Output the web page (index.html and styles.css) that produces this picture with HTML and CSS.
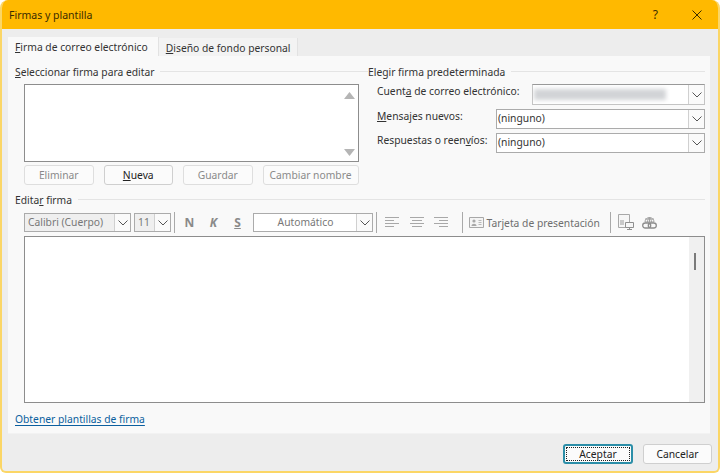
FILE: index.html
```html
<!DOCTYPE html>
<html lang="es">
<head>
    <meta charset="UTF-8">
    <meta name="viewport" content="width=device-width, initial-scale=1.0">
    <title>Firmas y plantilla</title>
    <link rel="stylesheet" href="styles.css">
</head>
<body>
    <div class="window">
        <header class="titlebar">
            <span class="title">Firmas y plantilla</span>
            <span class="help">?</span>
            <svg class="close" width="10" height="10" viewBox="0 0 10 10"><path d="M.5.5l9 9M9.500.5l-9 9" stroke="#3a2c00" fill="none"/></svg>
        </header>

        <div class="content">
            <div class="tabs">
                <div class="tab active"><u>F</u>irma de correo electrónico</div>
                <div class="tab"><u>D</u>iseño de fondo personal</div>
            </div>

            <main class="panel">
                <div class="top">
                    <section class="select-col">
                        <div class="group-title"><span><u>S</u>eleccionar firma para editar</span></div>
                        <div class="listbox">
                            <div class="list-scroll">
                                <svg width="11" height="7" viewBox="0 0 11 7"><path d="M5.500 0L11 7H0z" fill="#b5b5b5"/></svg>
                                <svg width="11" height="7" viewBox="0 0 11 7"><path d="M0 0h11L5.500 7z" fill="#b5b5b5"/></svg>
                            </div>
                        </div>
                        <div class="list-buttons">
                            <button class="btn off">Eliminar</button>
                            <button class="btn"><u>N</u>ueva</button>
                            <button class="btn off">Guardar</button>
                            <button class="btn off wide">Cambiar nombre</button>
                        </div>
                    </section>

                    <section class="default-col">
                        <div class="group-title"><span>Elegir firma predeterminada</span></div>
                        <div class="field first">
                            <label>Cuent<u>a</u> de correo electrónico:</label>
                            <div class="combo mail">
                                <div class="combo-value"><div class="blurred"></div></div>
                                <div class="arrow"><svg width="10" height="6" viewBox="0 0 10 6"><path d="M.5.5L5 5 9.500.5" stroke="#555" fill="none"/></svg></div>
                            </div>
                        </div>
                        <div class="field">
                            <label><u>M</u>ensajes nuevos:</label>
                            <div class="combo">
                                <div class="combo-value">(ninguno)</div>
                                <div class="arrow"><svg width="10" height="6" viewBox="0 0 10 6"><path d="M.5.5L5 5 9.500.5" stroke="#555" fill="none"/></svg></div>
                            </div>
                        </div>
                        <div class="field">
                            <label>Respuestas o reen<u>v</u>íos:</label>
                            <div class="combo">
                                <div class="combo-value">(ninguno)</div>
                                <div class="arrow"><svg width="10" height="6" viewBox="0 0 10 6"><path d="M.5.5L5 5 9.500.5" stroke="#555" fill="none"/></svg></div>
                            </div>
                        </div>
                    </section>
                </div>

                <div class="group-title edit-title"><span>Edita<u>r</u> firma</span></div>

                <div class="toolbar">
                    <div class="combo small font-box">
                        <div class="combo-value grey">Calibri (Cuerpo)</div>
                        <div class="arrow"><svg width="10" height="6" viewBox="0 0 10 6"><path d="M.5.5L5 5 9.500.5" stroke="#555" fill="none"/></svg></div>
                    </div>
                    <div class="combo small size-box">
                        <div class="combo-value grey">11</div>
                        <div class="arrow"><svg width="10" height="6" viewBox="0 0 10 6"><path d="M.5.5L5 5 9.500.5" stroke="#555" fill="none"/></svg></div>
                    </div>
                    <div class="sep"></div>
                    <span class="fmt bold">N</span>
                    <span class="fmt italic">K</span>
                    <span class="fmt under">S</span>
                    <div class="combo small color-box">
                        <div class="combo-value center">Automático</div>
                        <div class="arrow"><svg width="10" height="6" viewBox="0 0 10 6"><path d="M.5.5L5 5 9.500.5" stroke="#555" fill="none"/></svg></div>
                    </div>
                    <div class="sep"></div>
                    <svg class="align" width="14" height="11" viewBox="0 0 14 11"><path d="M0 .5h14M0 3.500h9M0 6.500h14M0 9.500h9" stroke="#a8a8a8"/></svg>
                    <svg class="align" width="14" height="11" viewBox="0 0 14 11"><path d="M0 .5h14M2 3.500h10M0 6.500h14M2 9.500h10" stroke="#a8a8a8"/></svg>
                    <svg class="align" width="14" height="11" viewBox="0 0 14 11"><path d="M0 .5h14M5 3.500h9M0 6.500h14M5 9.500h9" stroke="#a8a8a8"/></svg>
                    <div class="sep"></div>
                    <svg class="card" width="15" height="11" viewBox="0 0 15 11"><path d="M.5.5h14v10H.5z" fill="#f4f4f4" stroke="#a8a8a8"/><circle cx="5" cy="4" r="1.600" fill="#a8a8a8"/><path d="M2.500 9c0-3 5-3 5 0z" fill="#a8a8a8"/><path d="M9.500 3.500h3M9.500 5.500h3M9.500 7.500h3" stroke="#b8b8b8"/></svg>
                    <span class="card-text">Tarjeta de presentación</span>
                    <div class="sep"></div>
                    <svg class="pic" width="16" height="17" viewBox="0 0 16 17"><path d="M.5.5h11v13H.5z" fill="#f6f6f6" stroke="#a8a8a8"/><path d="M2 6h4v5H2z" fill="#c8c8c8"/><path d="M7.500 8.500h8v5h-8zM11.500 13.500v2M9 15.500h5" fill="#f6f6f6" stroke="#8f8f8f"/></svg>
                    <svg class="pic" width="15" height="17" viewBox="0 0 15 17"><path d="M3 8a4.500 4.500 0 0 1 9 0zM3 5h9M7.500 3.500V8M5.500 8c0-2 .8-3.500 2-4.500 1.200 1 2 2.500 2 4.500" fill="none" stroke="#a0a0a0"/><rect x=".7" y="9" width="8" height="5" rx="2.500" fill="none" stroke="#8c8c8c" stroke-width="1.300"/><rect x="6.300" y="9" width="8" height="5" rx="2.500" fill="none" stroke="#8c8c8c" stroke-width="1.300"/></svg>
                </div>

                <div class="editor">
                    <div class="editor-scroll"><div class="thumb"></div></div>
                </div>

                <a class="link" href="#">Obtener plantillas de firma</a>
            </main>

            <footer class="footer">
                <button class="btn dialog default"><span>Aceptar</span></button>
                <button class="btn dialog cancel">Cancelar</button>
            </footer>
        </div>
    </div>
</body>
</html>
```

FILE: styles.css
```css
* {
    margin: 0;
    padding: 0;
    box-sizing: border-box;
    font-family: "Noto Sans", "Open Sans", sans-serif;
}

html, body {
    width: 720px;
    height: 473px;
    overflow: hidden;
    background-color: #fff;
}

.window {
    width: 720px;
    height: 473px;
    display: flex;
    flex-direction: column;
    background-color: #ededed;
    border: 2px solid #fbd666;
    border-top: none;
    border-radius: 8px 8px 6px 6px;
    overflow: hidden;
    color: #333;
    font-size: 10.3px;
}

.titlebar {
    height: 29px;
    margin: 0 -2px;
    padding: 0 18px 0 9px;
    display: flex;
    align-items: center;
    flex: none;
    background-color: #ffb900;
    color: #3a2c00;
}

.title {
    flex: 1;
    font-size: 10.5px;
}

.help {
    margin-right: 34px;
    font-size: 12px;
}

.content {
    flex: 1;
    padding: 8px 6px 0;
    display: flex;
    flex-direction: column;
}

.tabs {
    height: 19px;
    display: flex;
    align-items: flex-end;
}

.tab {
    height: 18px;
    padding: 0 6px 0 7px;
    line-height: 20px;
    background-color: #f3f3f3;
    border-right: 1px solid #e2e2e2;
}

.tab.active {
    height: 19px;
    padding-right: 10px;
    background-color: #f9f9f9;
}

.panel {
    width: 702px;
    height: 378px;
    padding: 8px 5px 0 7px;
    background-color: #f9f9f9;
    border-bottom: 1px solid #f2f2f2;
}

.top {
    display: flex;
    height: 128px;
}

.select-col {
    width: 353px;
}

.default-col {
    flex: 1;
}

.group-title {
    display: flex;
    align-items: center;
    height: 15px;
    white-space: nowrap;
}

.group-title::after {
    content: "";
    flex: 1;
    margin-left: 6px;
    border-top: 1px solid #e4e4e4;
}

.listbox {
    width: 335px;
    height: 78px;
    margin: 5px 0 3px 9px;
    display: flex;
    justify-content: flex-end;
    background-color: #fff;
    border: 1px solid #8d8d8d;
}

.list-scroll {
    width: 18px;
    padding: 7px 0 5px;
    display: flex;
    flex-direction: column;
    align-items: center;
    justify-content: space-between;
}

.list-buttons {
    display: flex;
    gap: 10px;
    margin-left: 9px;
}

.btn {
    width: 69.5px;
    height: 20px;
    background-color: #fbfbfb;
    border: 1px solid #cfcfcf;
    border-radius: 3px;
    color: #222;
    font-size: 10.3px;
}

.btn.off {
    color: #8a8a8a;
    border-color: #dedede;
}

.btn.wide {
    width: 96px;
}

.field {
    display: flex;
    justify-content: space-between;
    height: 20px;
    margin: 4px 0 0 9px;
}

.field.first {
    height: 21px;
    margin-top: 5px;
}

.field label {
    line-height: 14px;
}

.combo {
    width: 209px;
    display: flex;
    background-color: #fff;
    border: 1px solid #ababab;
}

.combo.mail {
    width: 173px;
    border-color: #c4c4c4;
    border-top-color: #999;
}

.combo-value {
    flex: 1;
    min-width: 0;
    padding-left: 1px;
    line-height: 17px;
    white-space: nowrap;
    overflow: hidden;
}

.blurred {
    width: 132px;
    height: 11px;
    margin-top: 4px;
    background-color: #d2d4d7;
    filter: blur(2px);
}

.arrow {
    width: 16px;
    display: flex;
    align-items: center;
    justify-content: center;
    background-color: #fafafa;
    border-left: 1px solid #d0d0d0;
}

.toolbar {
    display: flex;
    align-items: center;
    height: 21px;
    margin: 5px 0 3px 9px;
}

.combo.small {
    height: 19px;
    color: #777;
}

.font-box {
    width: 107px;
    margin-right: 3px;
}

.size-box {
    width: 37px;
}

.color-box {
    width: 120px;
}

.combo-value.grey {
    padding-left: 3px;
    background-color: #efefef;
}

.combo-value.center {
    text-align: center;
}

.small .combo-value {
    line-height: 16px;
}

.sep {
    width: 1px;
    height: 21px;
    margin: 0 7px 0 3px;
    background-color: #a9a9a9;
}

.color-box + .sep {
    margin-right: 8px;
}

.align + .sep {
    margin-right: 6px;
}

.fmt {
    width: 11px;
    margin-right: 13px;
    color: #8a8a8a;
    font-size: 12px;
    font-weight: 700;
    text-align: center;
}

.fmt.bold {
    margin-left: 2px;
}

.fmt.italic {
    font-style: italic;
}

.fmt.under {
    margin-right: 10px;
    text-decoration: underline;
}

.align {
    margin-right: 10.5px;
}

.card {
    margin-right: 3px;
}

.card-text {
    width: 120.5px;
    color: #6e6e6e;
    white-space: nowrap;
}

.pic {
    margin-right: 8px;
}

.editor {
    width: 681px;
    height: 167px;
    margin-left: 9px;
    display: flex;
    justify-content: flex-end;
    background-color: #fff;
    border: 1px solid #8d8d8d;
}

.editor-scroll {
    width: 15px;
    padding: 16px 0 0 5px;
    background-color: #f0f0f0;
}

.thumb {
    width: 2px;
    height: 17px;
    background-color: #7a7a7a;
}

.link {
    display: block;
    margin-top: 9px;
    color: #0b5f9e;
    text-underline-offset: 2px;
}

.footer {
    display: flex;
    justify-content: flex-end;
    gap: 10px;
    margin-top: 10px;
}

.btn.dialog {
    width: 70px;
}

.btn.dialog.cancel {
    width: 69px;
}

.btn.default {
    padding: 1px;
    border: 2px solid #2b8ea8;
}

.btn.default span {
    display: block;
    height: 100%;
    line-height: 13px;
    border: 1px dotted #222;
}
```
